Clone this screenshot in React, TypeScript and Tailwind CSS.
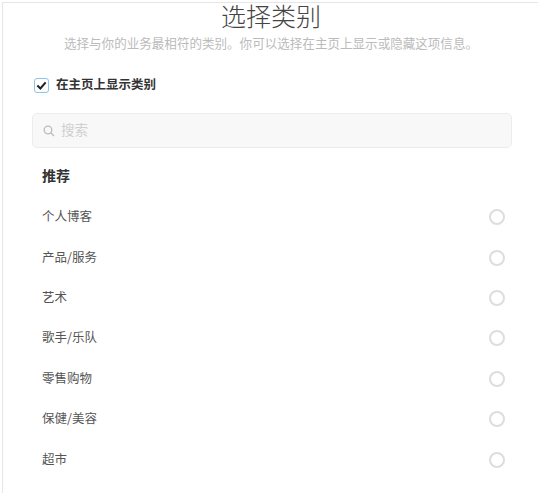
import React from "react";

const items = ["个人博客", "产品/服务", "艺术", "歌手/乐队", "零售购物", "保健/美容", "超市"];

export default function App() {
  return (
    <div className="h-[493px] w-[538px] overflow-hidden bg-white pt-[2px] pl-[2px] font-['Liberation_Sans','Noto_Sans_CJK_SC',sans-serif]">
      <div className="h-full border-t border-l border-[#e6e6e6] pl-[29px] pr-[26px]">
        <h1 className="text-center text-[25px] leading-[28px] font-light text-[#444] pr-[2px]">选择类别</h1>
        <p className="mt-[1px] text-center text-[12.56px] leading-[24px] text-[#bbbbbb] pr-[2px]">选择与你的业务最相符的类别。你可以选择在主页上显示或隐藏这项信息。</p>
        <label className="mt-[19px] ml-[2px] flex items-center gap-[7px] h-[20px]">
          <span className="flex h-[15px] w-[15px] items-center justify-center rounded-[3px] border-[1.5px] border-[#8cc4ea] bg-white">
            <svg width="11" height="11" viewBox="0 0 12 12" fill="none" stroke="#222" strokeWidth="2.2">
              <path d="M1.5 6 L4.8 9.2 L10.5 2.5" />
            </svg>
          </span>
          <span className="text-[12.5px] font-bold text-[#333]">在主页上显示类别</span>
        </label>
        <div className="mt-[18px] flex h-[35px] w-[480px] items-center gap-[6px] rounded-[5px] border border-[#ececec] bg-[#f8f8f8] px-[10px]">
          <svg width="12" height="12" viewBox="0 0 12 12" fill="none" stroke="#bbb" strokeWidth="1.3">
            <circle cx="5" cy="5" r="3.8" />
            <path d="M8 8 L11 11" />
          </svg>
          <span className="pt-[2px] text-[13.5px] text-[#cfcfcf]">搜索</span>
        </div>
        <h2 className="mt-[18px] ml-[10px] text-[14px] leading-[20px] font-bold text-[#333]">推荐</h2>
        <ul className="mt-[11px]">
          {items.map((t) => (
            <li key={t} className="flex h-[40.4px] items-center justify-between pl-[10px] pr-[7px]">
              <span className="pb-[1px] font-['Noto_Sans_CJK_SC',sans-serif] text-[12.5px] text-[#555]">{t}</span>
              <span className="h-[16px] w-[16px] rounded-full border-2 border-[#dddddd] bg-white" />
            </li>
          ))}
        </ul>
      </div>
    </div>
  );
}
